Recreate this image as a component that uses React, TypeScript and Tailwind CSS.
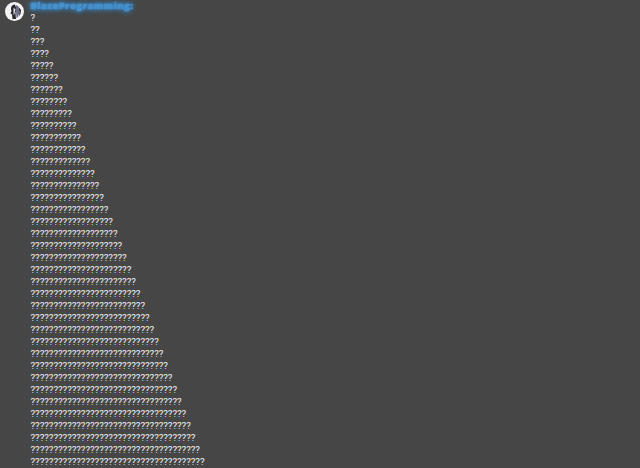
import React from "react";

const rows = Array.from({ length: 38 }, (_, i) => "?".repeat(i + 1));

export default function App() {
  return (
    <div className="h-[468px] w-[640px] overflow-hidden bg-[#464646] flex font-['Roboto',sans-serif]">
      <div className="w-[30px] shrink-0 pl-[5px] pt-[2px]">
        <svg width="19" height="19" viewBox="0 0 19 19">
          <circle cx="9.5" cy="9.5" r="9.5" fill="#f4f4f4" />
          <path d="M10 2.5 C6 3 5.5 6 6.5 9 L5.5 11.5 L7 12.5 L7.5 17 L11 17 L10.5 11 L11.5 7 Z" fill="#2a2a30" />
          <path d="M11 3 L13.5 4.5 L14.5 10 L13 15 L11.5 16 L11 10 Z" fill="#6a6f85" />
          <path d="M13.5 5 L16 8 L15.5 12 L14 14 L14.5 10 Z" fill="#1f1f24" />
          <path d="M8.5 6 L10.5 7 L9.5 12 L8.5 13 Z" fill="#dfe3ea" />
        </svg>
      </div>
      <div className="flex flex-col pl-[0.5px]">
        <div className="h-[11px] text-[9.5px] leading-[11px] font-extrabold tracking-[0.42px] text-[#4a90c8] font-['Open_Sans',sans-serif] whitespace-nowrap [text-shadow:0_0_2px_#3a9be8,0_0_4px_#3a9be8,0_0_6px_#3a9be8]">
          BlazeProgramming:
        </div>
        <div className="mt-[1.45px]">
          {rows.map((r) => (
            <div key={r} className="h-[12px] text-[9.7px] leading-[12px] text-[#f0f0f0] whitespace-nowrap">
              {r}
            </div>
          ))}
        </div>
      </div>
    </div>
  );
}
